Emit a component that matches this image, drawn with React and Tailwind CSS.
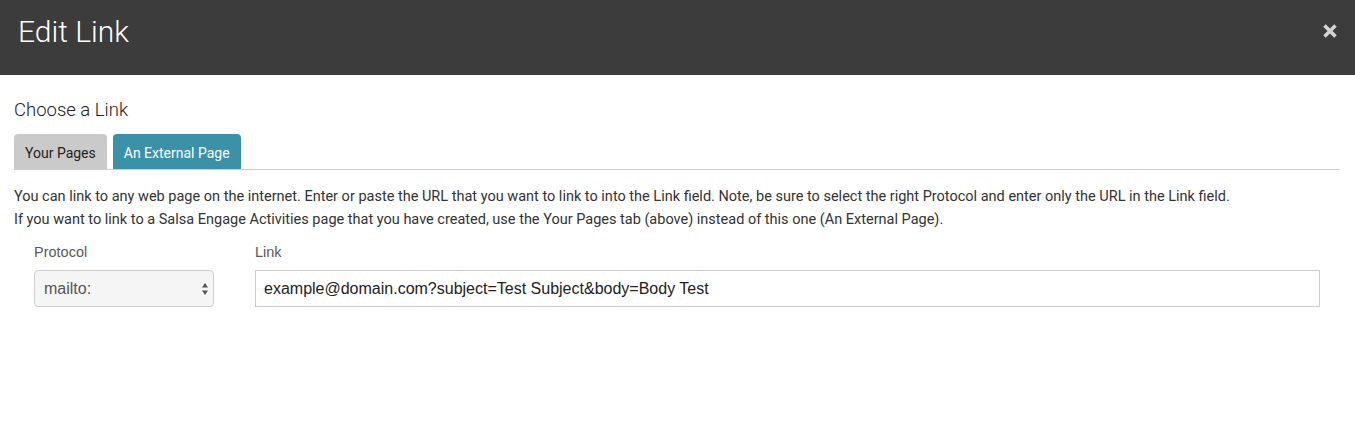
// App.jsx

import React, { useState } from 'react';

const roboto = { fontFamily: 'Roboto, "Liberation Sans", sans-serif' };

const Tab = ({ label, active, onClick }) => (
  <button
    type="button"
    onClick={onClick}
    className={
      active
        ? 'h-[35px] px-[11px] pt-[3px] rounded-t-[4px] text-[14px] text-white bg-[#3a91a8]'
        : 'h-[35px] px-[11px] pt-[3px] rounded-t-[4px] text-[14px] text-[#222] bg-[#cacaca]'
    }
  >
    {label}
  </button>
);

const App = () => {
  const [tab, setTab] = useState('external');
  const [protocol, setProtocol] = useState('mailto:');
  const [link, setLink] = useState('example@domain.com?subject=Test Subject&body=Body Test');

  return (
    <div className="w-full min-h-[427px] bg-white" style={roboto}>
      <div className="h-[75px] bg-[#3c3c3c] flex items-center justify-between pl-[18px] pr-[10px]">
        <h1 className="text-[30px] text-white font-light leading-none -mt-[12px]">Edit Link</h1>
        <button type="button" className="w-[30px] h-[30px] flex items-center justify-center -mt-[14px]">
          <svg width="16" height="16" viewBox="0 0 16 16">
            <path d="M2.5 2.5 L13.5 13.5 M13.5 2.5 L2.5 13.5" stroke="#d4d4d4" strokeWidth="3.6" strokeLinecap="butt" />
          </svg>
        </button>
      </div>

      <div className="pl-[14px] pr-[15px]">
        <h2 className="text-[18.5px] text-[#222] font-light mt-[23px] leading-[24px]">Choose a Link</h2>

        <div className="flex gap-[6px] mt-[12px] border-b border-[#cccccc]">
          <Tab label="Your Pages" active={tab === 'pages'} onClick={() => setTab('pages')} />
          <Tab label="An External Page" active={tab === 'external'} onClick={() => setTab('external')} />
        </div>

        <div className="mt-[15px] text-[14.5px] leading-[23px] text-[#333]">
          <p>You can link to any web page on the internet. Enter or paste the URL that you want to link to into the Link field. Note, be sure to select the right Protocol and enter only the URL in the Link field.</p>
          <p>If you want to link to a Salsa Engage Activities page that you have created, use the Your Pages tab (above) instead of this one (An External Page).</p>
        </div>

        <div
          className="flex gap-[41px] pl-[20px] pr-[20px] mt-[11px]"
          style={{ fontFamily: '"Liberation Sans", Arial, sans-serif' }}
        >
          <div className="w-[180px] shrink-0">
            <label className="block text-[14.5px] text-[#595959] leading-[20px] mb-[8px]">Protocol</label>
            <div className="relative">
              <select
                value={protocol}
                onChange={(e) => setProtocol(e.target.value)}
                className="w-full h-[37px] appearance-none bg-[#f5f5f5] border border-[#cccccc] rounded-[4px] pl-[9px] text-[16px] text-[#555] outline-none"
              >
                <option>http://</option>
                <option>https://</option>
                <option>mailto:</option>
              </select>
              <svg className="absolute right-[5px] top-[12px] pointer-events-none" width="8" height="14" viewBox="0 0 8 14">
                <path d="M4 1 L7 5.5 L1 5.5 Z" fill="#555" />
                <path d="M4 13 L7 8.5 L1 8.5 Z" fill="#555" />
              </svg>
            </div>
          </div>
          <div className="flex-1">
            <label className="block text-[14.5px] text-[#595959] leading-[20px] mb-[8px]">Link</label>
            <input
              value={link}
              onChange={(e) => setLink(e.target.value)}
              className="w-full h-[37px] border border-[#cccccc] px-[8px] text-[16px] text-[#222] outline-none"
            />
          </div>
        </div>
      </div>
    </div>
  );
};

export default App;
